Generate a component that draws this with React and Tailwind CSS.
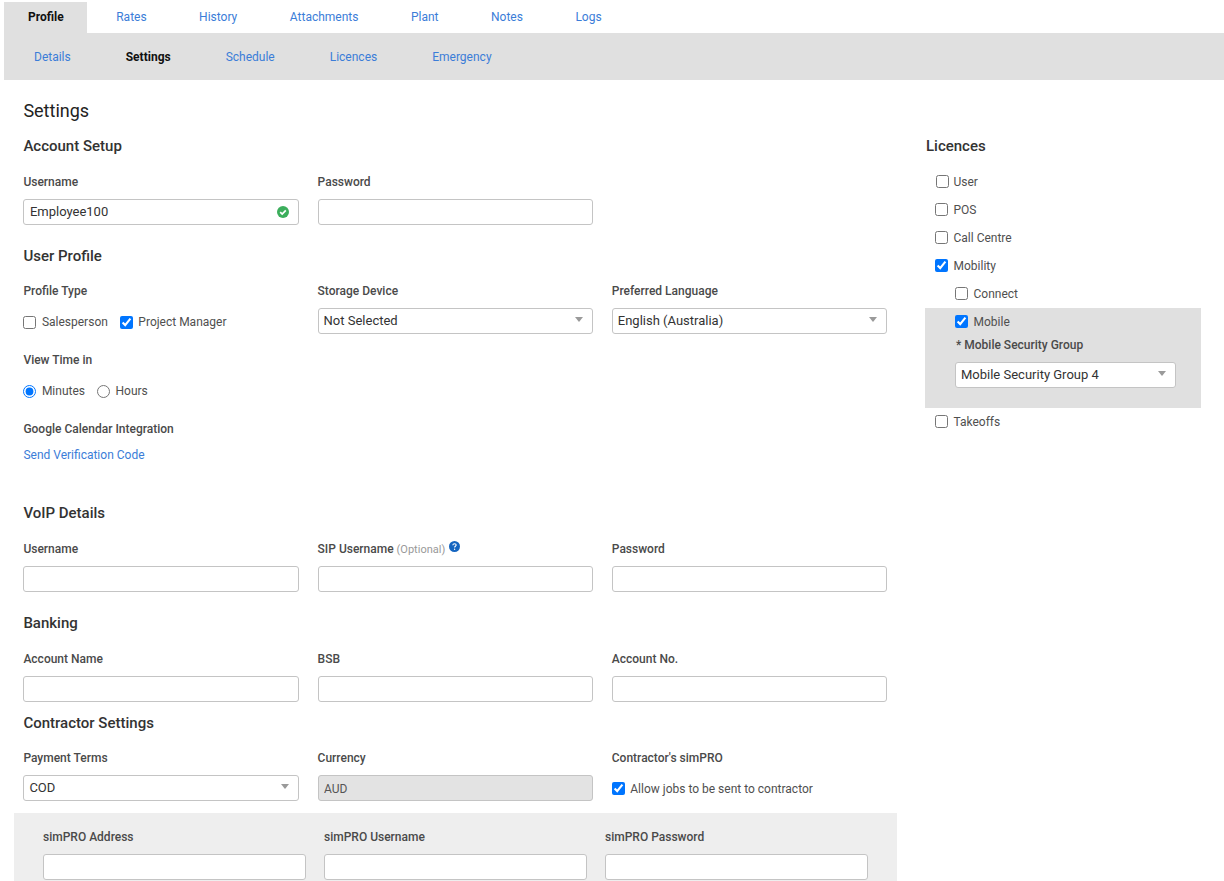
const font = { fontFamily: 'Roboto, sans-serif' };

const tabs = ['Profile', 'Rates', 'History', 'Attachments', 'Plant', 'Notes', 'Logs'];
const subTabs = ['Details', 'Settings', 'Schedule', 'Licences', 'Emergency'];

function Label({ children }) {
  return <div className="h-4 text-[12px] leading-4 font-medium text-[#4a4a4a] mb-[9px] whitespace-nowrap">{children}</div>;
}

function TextInput({ className = 'bg-white text-[#333] text-[13px] pb-[1px]', ...props }) {
  return (
    <input
      type="text"
      className={`block w-full h-[26px] px-[5.5px] border border-[#c4c4c4] rounded-[3px] outline-none ${className}`}
      {...props}
    />
  );
}

function Select({ value }) {
  return (
    <div className="relative h-[26px] w-full">
      <select
        defaultValue={value}
        className="block w-full h-full appearance-none px-[5px] bg-white border border-[#c4c4c4] rounded-[3px] text-[13px] text-[#333] outline-none"
      >
        <option>{value}</option>
      </select>
      <span className="absolute right-[10px] top-[9px] w-0 h-0 border-l-[4px] border-r-[4px] border-t-[5px] border-l-transparent border-r-transparent border-t-[#9a9a9a]" />
    </div>
  );
}

function Field({ label, children }) {
  return (
    <div>
      <Label>{label}</Label>
      {children || <TextInput />}
    </div>
  );
}

function Heading({ children, className = '' }) {
  return <h3 className={`text-[15px] leading-5 font-medium text-[#333] ${className}`}>{children}</h3>;
}

function Check({ label, checked, className = '' }) {
  return (
    <label className={`flex items-center h-4 text-[12px] text-[#4f4f4f] whitespace-nowrap ${className}`}>
      <input type="checkbox" defaultChecked={checked} className="w-[13px] h-[13px] m-0 mr-[5.5px] accent-[#0075ff]" />
      {label}
    </label>
  );
}

function Radio({ label, checked }) {
  return (
    <label className="flex items-center h-4 text-[12px] text-[#4f4f4f]">
      <input type="radio" name="time" defaultChecked={checked} className="w-[13px] h-[13px] m-0 mr-[5.5px] accent-[#0075ff]" />
      {label}
    </label>
  );
}

function ValidIcon() {
  return (
    <svg viewBox="0 0 12 12" className="absolute right-[10px] top-[7px] w-3 h-3">
      <circle cx="6" cy="6" r="6" fill="#3cae5c" />
      <path d="M3.2 6.2 5.2 8.1 8.8 4.3" fill="none" stroke="#fff" strokeWidth="1.7" />
    </svg>
  );
}

function HelpIcon() {
  return (
    <svg viewBox="0 0 11 11" className="inline-block w-[11px] h-[11px] ml-1 align-[1px]">
      <circle cx="5.5" cy="5.5" r="5.5" fill="#1565c0" />
      <path d="M3.8 4.2C3.9 3.2 4.6 2.7 5.5 2.7c1 0 1.7.6 1.7 1.4 0 1.2-1.6 1.2-1.6 2.4" fill="none" stroke="#fff" strokeWidth="1.1" />
      <circle cx="5.6" cy="8.2" r=".7" fill="#fff" />
    </svg>
  );
}

function Licences() {
  return (
    <div className="w-[276px] ml-[38px]">
      <Heading className="mt-[13px] pl-[1px]">Licences</Heading>
      <div className="mt-[18px] pl-[10px] flex flex-col gap-3 [&_input]:mb-[2px]">
        <Check label="User" className="pl-[1px] [&>input]:mr-[4.5px]" />
        <Check label="POS" />
        <Check label="Call Centre" />
        <Check label="Mobility" checked />
        <Check label="Connect" className="pl-5" />
      </div>
      <div className="mt-[6px] h-[100px] bg-[#e0e0e0] pt-[6px] pl-[30px] pr-[25px]">
        <Check label="Mobile" checked className="[&>input]:mb-[2px]" />
        <div className="mt-[7px] mb-[9px] pl-[1px] text-[12px] leading-4 font-medium text-[#4a4a4a]">* Mobile Security Group</div>
        <Select value="Mobile Security Group 4" />
      </div>
      <div className="mt-[6px] pl-[10px] [&_input]:mb-[2px]">
        <Check label="Takeoffs" />
      </div>
    </div>
  );
}

export default function App() {
  return (
    <div className="w-[1224px] h-[881px] overflow-hidden bg-white" style={font}>
      <nav className="flex pl-1 pt-[2px] h-[33px] gap-[4.5px]">
        {tabs.map((tab) => (
          <a
            key={tab}
            className={
              tab === 'Profile'
                ? 'pl-6 pr-[23px] mr-[1px] h-[31px] leading-[30px] text-[12px] font-bold text-[#111] bg-[#e0e0e0]'
                : 'px-6 h-[31px] leading-[30px] text-[12px] text-[#3b7dd8]'
            }
          >
            {tab}
          </a>
        ))}
      </nav>
      <div className="flex ml-1 h-[47px] pl-[30px] gap-[55px] items-center bg-[#e0e0e0]">
        {subTabs.map((tab) => (
          <a key={tab} className={tab === 'Settings' ? 'text-[12px] font-bold text-[#111]' : 'text-[12px] text-[#3b7dd8]'}>
            {tab}
          </a>
        ))}
      </div>

      <main className="pl-[23.4px]">
        <h2 className="mt-[19px] text-[18px] leading-6 font-normal text-[#222]">Settings</h2>
        <div className="flex">
          <div className="w-[863.6px] shrink-0">
            <Heading className="mt-[13px]">Account Setup</Heading>
            <div className="mt-[18px] grid grid-cols-3 gap-x-[19px]">
              <Field label="Username">
                <div className="relative">
                  <TextInput defaultValue="Employee100" />
                  <ValidIcon />
                </div>
              </Field>
              <Field label="Password" />
            </div>

            <Heading className="mt-[21px]">User Profile</Heading>
            <div className="mt-[17px] grid grid-cols-3 gap-x-[19px]">
              <div>
                <Label>Profile Type</Label>
                <div className="flex h-[28px] items-center gap-3">
                  <Check label="Salesperson" />
                  <Check label="Project Manager" checked />
                </div>
              </div>
              <Field label="Storage Device"><Select value="Not Selected" /></Field>
              <Field label="Preferred Language"><Select value="English (Australia)" /></Field>
            </div>
            <div className="mt-4">
              <Label>View Time in</Label>
              <div className="mt-[15px] flex gap-3">
                <Radio label="Minutes" checked />
                <Radio label="Hours" />
              </div>
            </div>
            <div className="mt-[22px]">
              <Label>Google Calendar Integration</Label>
              <a className="block mt-[10px] text-[12px] leading-4 text-[#3b7dd8]">Send Verification Code</a>
            </div>

            <Heading className="mt-10">VoIP Details</Heading>
            <div className="mt-[18px] grid grid-cols-3 gap-x-[19px]">
              <Field label="Username" />
              <Field
                label={
                  <>
                    SIP Username <span className="font-normal text-[11px] text-[#999]">(Optional)</span>
                    <HelpIcon />
                  </>
                }
              />
              <Field label="Password" />
            </div>

            <Heading className="mt-[21px]">Banking</Heading>
            <div className="mt-[18px] grid grid-cols-3 gap-x-[19px]">
              <Field label="Account Name" />
              <Field label="BSB" />
              <Field label="Account No." />
            </div>

            <Heading className="mt-[11px]">Contractor Settings</Heading>
            <div className="mt-[17px] grid grid-cols-3 gap-x-[19px]">
              <Field label="Payment Terms"><Select value="COD" /></Field>
              <Field label="Currency">
                <TextInput defaultValue="AUD" disabled className="bg-[#e3e3e3] text-[#555] text-[12px] pt-[1px]" />
              </Field>
              <div>
                <Label>Contractor's simPRO</Label>
                <div className="flex h-[26px] items-center">
                  <Check label="Allow jobs to be sent to contractor" checked className="pt-[1px] [&>input]:mb-[1px]" />
                </div>
              </div>
            </div>

            <div className="mt-3 -ml-[9.4px] w-[883px] bg-[#eeeeee] pt-4 pb-5 pl-[29px] pr-[29px]">
              <div className="grid grid-cols-3 gap-x-[18px]">
                <Field label="simPRO Address" />
                <Field label="simPRO Username" />
                <Field label="simPRO Password" />
              </div>
            </div>
          </div>
          <Licences />
        </div>
      </main>
    </div>
  );
}
